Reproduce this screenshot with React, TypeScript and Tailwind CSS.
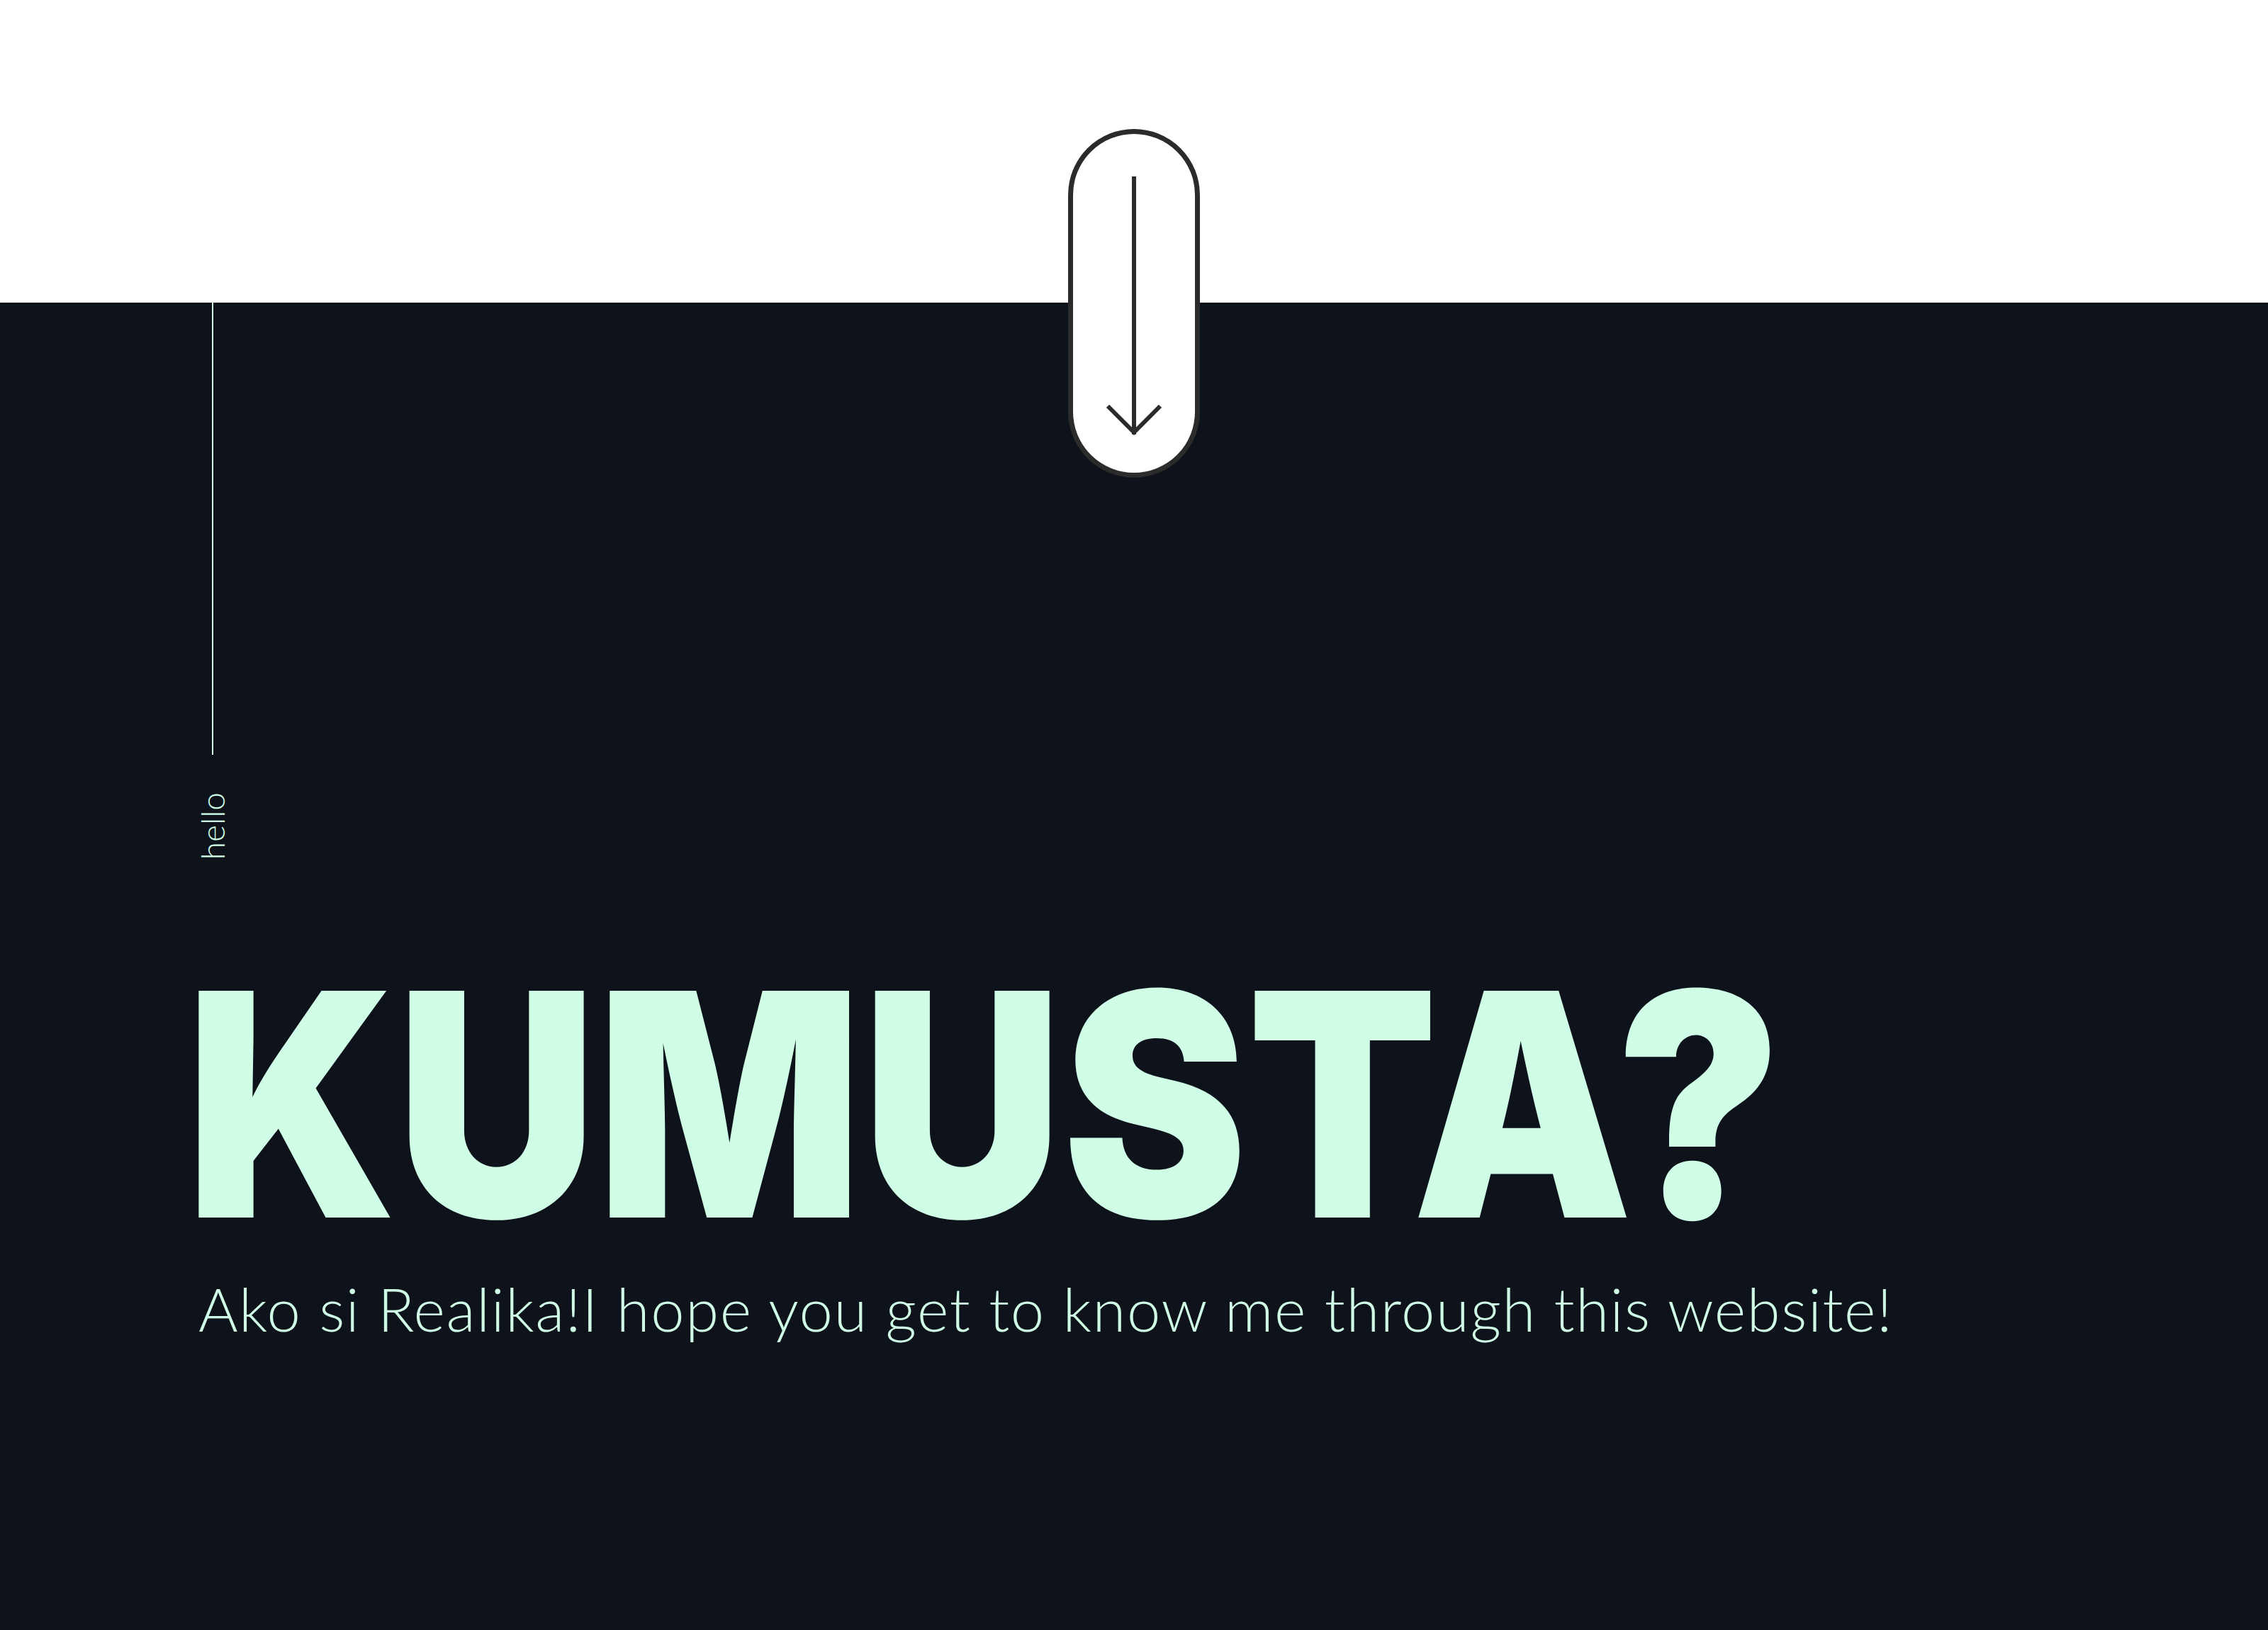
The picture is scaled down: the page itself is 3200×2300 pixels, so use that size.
import React from "react";

const App = () => {
  return (
    <div className="relative flex flex-col w-full h-[2300px] bg-[#0e121a] overflow-hidden">
      <header className="h-[427px] w-full bg-white shrink-0" />

      <a
        href="#"
        className="absolute left-1/2 -translate-x-1/2 top-[182px] w-[186px] h-[492px] rounded-full border-[7px] border-[#2b2b2b] bg-white flex justify-center pt-[60px]"
      >
        <svg width="80" height="372" viewBox="0 0 80 372" fill="none">
          <line x1="40" y1="0" x2="40" y2="364" stroke="#2b2b2b" strokeWidth="6" />
          <polyline
            points="3,324 40,361 77,324"
            stroke="#2b2b2b"
            strokeWidth="6"
            fill="none"
          />
        </svg>
      </a>

      <main className="flex-1 pl-[280px] flex flex-col text-[#cffde6]">
        <div className="flex flex-col items-center w-[40px]">
          <div className="w-[2px] h-[638px] bg-[#cffde6]" />
          <span
            className="mt-[53px] [writing-mode:vertical-rl] rotate-180 text-[46px] leading-none font-light"
            style={{ fontFamily: "Lato, 'Noto Sans', sans-serif" }}
          >
            hello
          </span>
        </div>

        <h1
          className="mt-[165px] -ml-[18px] text-[440px] leading-[360px] font-black tracking-normal whitespace-nowrap origin-left scale-x-[0.89]"
          style={{ fontFamily: "Inter, 'Roboto', sans-serif" }}
        >
          KUMUSTA?
        </h1>

        <p
          className="mt-[66px] text-[85px] leading-none font-light tracking-[0.019em] whitespace-nowrap"
          style={{ fontFamily: "Lato, 'Noto Sans', sans-serif" }}
        >
          Ako si Realika!I hope you get to know me through this website!
        </p>
      </main>
    </div>
  );
};

export default App;
